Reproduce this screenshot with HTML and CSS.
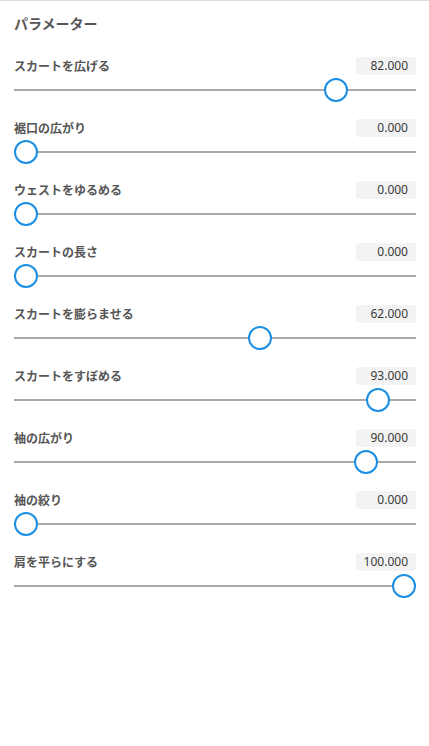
FILE: index.html
```html
<!DOCTYPE html>
<html lang="ja">
<head>
  <meta charset="UTF-8">
  <title>パラメーター</title>
  <link rel="stylesheet" href="styles.css">
</head>
<body>
  <div class="panel">
    <h2>パラメーター</h2>

    <div class="param">
      <div class="param-head"><span class="label">スカートを広げる</span><span class="value">82.000</span></div>
      <input type="range" min="0" max="100" value="82">
    </div>
    <div class="param">
      <div class="param-head"><span class="label">裾口の広がり</span><span class="value">0.000</span></div>
      <input type="range" min="0" max="100" value="0">
    </div>
    <div class="param">
      <div class="param-head"><span class="label">ウェストをゆるめる</span><span class="value">0.000</span></div>
      <input type="range" min="0" max="100" value="0">
    </div>
    <div class="param">
      <div class="param-head"><span class="label">スカートの長さ</span><span class="value">0.000</span></div>
      <input type="range" min="0" max="100" value="0">
    </div>
    <div class="param">
      <div class="param-head"><span class="label">スカートを膨らませる</span><span class="value">62.000</span></div>
      <input type="range" min="0" max="100" value="62">
    </div>
    <div class="param">
      <div class="param-head"><span class="label">スカートをすぼめる</span><span class="value">93.000</span></div>
      <input type="range" min="0" max="100" value="93">
    </div>
    <div class="param">
      <div class="param-head"><span class="label">袖の広がり</span><span class="value">90.000</span></div>
      <input type="range" min="0" max="100" value="90">
    </div>
    <div class="param">
      <div class="param-head"><span class="label">袖の絞り</span><span class="value">0.000</span></div>
      <input type="range" min="0" max="100" value="0">
    </div>
    <div class="param">
      <div class="param-head"><span class="label">肩を平らにする</span><span class="value">100.000</span></div>
      <input type="range" min="0" max="100" value="100">
    </div>
  </div>
</body>
</html>
```

FILE: styles.css
```css
body {
  margin: 0;
  background: #fff;
  font-family: "Noto Sans", "Noto Sans CJK JP", sans-serif;
  color: #555;
}

.panel {
  border-top: 1px solid #ddd;
  padding: 0 13px 0 14px;
}

h2 {
  margin: 13px 0 23px;
  font-size: 14px;
  line-height: 20px;
  font-weight: bold;
  color: #555;
}

.param {
  height: 62px;
}

.param-head {
  display: flex;
  justify-content: space-between;
  align-items: center;
  height: 18px;
}

.label {
  font-size: 12px;
  font-weight: bold;
  color: #555;
}

.value {
  width: 60px;
  height: 18px;
  line-height: 18px;
  box-sizing: border-box;
  padding-right: 8px;
  text-align: right;
  font-size: 12px;
  color: #3a3a3a;
  background: #f3f3f3;
  border-radius: 3px;
}

input[type="range"] {
  -webkit-appearance: none;
  appearance: none;
  display: block;
  width: 100%;
  height: 24px;
  margin: 3px 0 0;
  background: transparent;
}

input[type="range"]::-webkit-slider-runnable-track {
  height: 2px;
  background: #a9a9a9;
}

input[type="range"]::-webkit-slider-thumb {
  -webkit-appearance: none;
  width: 24px;
  height: 24px;
  margin-top: -11px;
  box-sizing: border-box;
  border: 2px solid #1a8fe3;
  border-radius: 50%;
  background: #fff;
}
```
